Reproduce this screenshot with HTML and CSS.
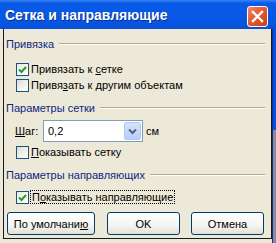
FILE: index.html
```html
<!DOCTYPE html>
<html lang="ru">

<head>
    <meta charset="UTF-8">
    <meta name="viewport" content="width=device-width,initial-scale=1.0">
    <title>Сетка и направляющие</title>
    <link rel="stylesheet" href="styles.css">
</head>

<body>
    <div class="window">
        <!-- Title bar -->
        <div class="titlebar">
            <span class="title">Сетка и направляющие</span>
            <div class="close">
                <svg width="13" height="13" viewBox="0 0 13 13">
                    <path d="M2 2 L11 11 M11 2 L2 11" stroke="#fff" stroke-width="2.4" stroke-linecap="square" />
                </svg>
            </div>
        </div>
        <div class="frame">
            <div class="panel">
                <div class="group head-first">Привязка</div>
                <label class="check row-first">
                    <span class="box on"><svg width="9" height="9" viewBox="0 0 9 9"><path d="M1 4.5 L3.5 7 L8 2" fill="none" stroke="#21a121" stroke-width="2" /></svg></span>
                    <span>Привязать к <u>с</u>етке</span>
                </label>
                <label class="check">
                    <span class="box"></span>
                    <span>Привя<u>з</u>ать к другим объектам</span>
                </label>

                <div class="group">Параметры сетки</div>
                <div class="step">
                    <span class="step-label"><u>Ш</u>аг:</span>
                    <div class="combo">
                        <span class="combo-value">0,2</span>
                        <span class="combo-btn">
                            <svg width="9" height="7" viewBox="0 0 9 7"><path d="M1 1.5 L4.5 5 L8 1.5" fill="none" stroke="#4d6185" stroke-width="2" /></svg>
                        </span>
                    </div>
                    <span class="unit">см</span>
                </div>
                <label class="check row-grid">
                    <span class="box"></span>
                    <span><u>П</u>оказывать сетку</span>
                </label>

                <div class="group head-guides">Параметры направляющих</div>
                <label class="check row-guides">
                    <span class="box on"><svg width="9" height="9" viewBox="0 0 9 9"><path d="M1 4.5 L3.5 7 L8 2" fill="none" stroke="#21a121" stroke-width="2" /></svg></span>
                    <span class="focus">П<u>о</u>казывать направляющие</span>
                </label>

                <div class="buttons">
                    <button class="btn wide">По умолчани<u>ю</u></button>
                    <button class="btn">OK</button>
                    <button class="btn">Отмена</button>
                </div>
            </div>
            <div class="side"></div>
        </div>
    </div>
</body>

</html>
```
FILE: styles.css
```css
/* Dialog window */
* {
    padding: 0;
    margin: 0;
    box-sizing: border-box;
}

body {
    width: 276px;
    height: 243px;
    overflow: hidden;
    background: #ece9d8;
    font-family: "Liberation Sans", Arial, sans-serif;
    font-size: 11px;
    color: #000;
}

u {
    text-decoration: underline;
    text-underline-offset: 1px;
}

/* Title bar */
.titlebar {
    height: 29px;
    display: flex;
    align-items: center;
    justify-content: space-between;
    padding: 0 8px 1px 5px;
    background: linear-gradient(to bottom, #3b87f5 0, #0a5ae8 3px, #0657e4 70%, #0a4fd6 100%);
}

.title {
    color: #fff;
    font-weight: bold;
    font-size: 14px;
    margin-top: 2px;
    text-shadow: 1px 1px 0 #0a2f8f;
}

.close {
    width: 21px;
    height: 21px;
    margin-top: 5px;
    border: 1px solid #fff;
    border-radius: 3px;
    background: linear-gradient(135deg, #f08a6a 0, #e35a32 45%, #c8401c 100%);
    display: grid;
    place-items: center;
}

/* Body under the title */
.frame {
    display: flex;
    height: 214px;
    background: #ece9d8;
}

.panel {
    width: 269px;
    height: 210px;
    margin-left: 3px;
    border-left: 1px solid #1a1a1a;
    border-right: 1px solid #1a1a1a;
    border-bottom: 1px solid #1a1a1a;
    background: #ece9d8;
    display: flex;
    flex-direction: column;
}

.side {
    flex: 1;
    background: linear-gradient(to bottom, #0a4fd6 0, #0a4fd6 101px, #8c8c8c 101px);
    border-left: 1px solid #0833a0;
}

/* Group headers with a rule */
.group {
    display: flex;
    align-items: center;
    gap: 5px;
    height: 16px;
    margin: 7px 6px 0 2px;
    color: #102680;
}

.group::after {
    content: "";
    flex: 1;
    border-top: 1px solid #aca899;
    border-bottom: 1px solid #fff;
}

/* Checkbox rows */
.check {
    display: flex;
    align-items: center;
    height: 16px;
    padding-left: 12px;
    gap: 2px;
}

.row-first {
    margin-top: 9px;
}

.row-grid {
    margin-top: 2px;
}

.row-guides {
    margin-top: 6px;
}

.box {
    width: 13px;
    height: 13px;
    border: 1px solid #1c5180;
    background: linear-gradient(135deg, #dcdcd7 0, #f0f0ea 50%, #fff 100%);
    display: grid;
    place-items: center;
}

.box.on {
    background: linear-gradient(135deg, #e8e8e2 0, #f6f6f2 50%, #fff 100%);
}

.focus {
    outline: 1px dotted #000;
    outline-offset: 0;
    padding: 0 1px;
}

/* Step combo */
.step {
    display: flex;
    align-items: center;
    height: 22px;
    margin-top: 4px;
    padding-left: 11px;
}

.step-label {
    width: 28px;
}

.combo {
    width: 100px;
    height: 22px;
    border: 1px solid #7f9db9;
    background: #fff;
    display: flex;
    align-items: center;
    justify-content: space-between;
    padding: 1px;
}

.combo-value {
    padding-left: 3px;
}

.combo-btn {
    width: 17px;
    height: 18px;
    border: 1px solid #b6c8f6;
    border-radius: 2px;
    background: linear-gradient(to bottom, #d6e2fc 0, #b9cdf9 100%);
    display: grid;
    place-items: center;
}

.unit {
    margin-left: 3px;
}

/* Bottom buttons */
.buttons {
    display: flex;
    margin-top: 7px;
    padding-left: 3px;
    gap: 11px;
}

.btn {
    width: 73px;
    height: 23px;
    border: 1px solid #003c74;
    border-radius: 3px;
    background: linear-gradient(to bottom, #fff 0, #f4f4f0 60%, #e3e1d6 100%);
    font-family: "Liberation Sans", Arial, sans-serif;
    font-size: 11px;
    color: #000;
}

.btn.wide {
    width: 88px;
    margin-right: 1px;
}
```
